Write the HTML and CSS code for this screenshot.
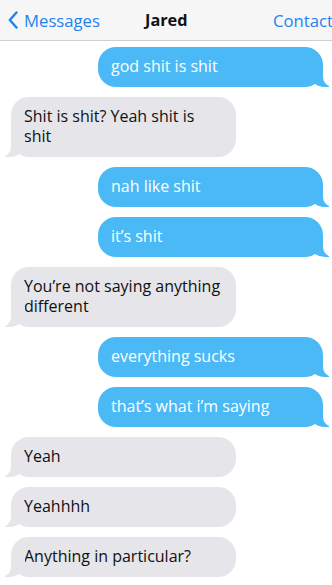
FILE: index.html
```html
<!DOCTYPE html>
<html>
<head>
<meta charset="utf-8">
<link rel="stylesheet" href="styles.css">
</head>
<body>
<header class="nav">
  <div class="back">
    <svg class="chev" width="10" height="18" viewBox="0 0 10 18"><path d="M8.5 1.5 L1.8 9 L8.5 16.5" fill="none" stroke="#1f82f2" stroke-width="2.4" stroke-linecap="round" stroke-linejoin="round"/></svg>
    <span>Messages</span>
  </div>
  <div class="title">Jared</div>
  <div class="contact">Contact</div>
</header>
<main class="thread">
  <div class="msg sent">god shit is shit</div>
  <div class="msg recv">Shit is shit? Yeah shit is shit</div>
  <div class="msg sent">nah like shit</div>
  <div class="msg sent">it’s shit</div>
  <div class="msg recv">You’re not saying anything different</div>
  <div class="msg sent">everything sucks</div>
  <div class="msg sent">that’s what i’m saying</div>
  <div class="msg recv">Yeah</div>
  <div class="msg recv">Yeahhhh</div>
  <div class="msg recv">Anything in particular?</div>
</main>
</body>
</html>
```
FILE: styles.css
```css
* { box-sizing: border-box; }
html, body { margin: 0; padding: 0; background: #fff; overflow: hidden; }
body { font-family: "Open Sans", "Noto Sans", sans-serif; width: 332px; }
.nav {
  height: 41px;
  background: #f6f6f6;
  border-bottom: 1px solid #cfcfcf;
  display: flex;
  align-items: center;
  white-space: nowrap;
  overflow: hidden;
}
.back {
  display: flex;
  align-items: center;
  gap: 6px;
  padding-left: 8px;
  color: #1f82f2;
  font-size: 16.7px;
  width: 140px;
  flex: none;
}
.chev { display: block; }
.title {
  font-weight: 700;
  font-size: 16.3px;
  color: #111;
  margin-left: 5px;
  width: 128px;
  flex: none;
}
.contact {
  color: #1f82f2;
  font-size: 16.7px;
}
.thread {
  display: flex;
  flex-direction: column;
  gap: 10px;
  padding-top: 6px;
  overflow: hidden;
}
.msg {
  position: relative;
  width: 225px;
  padding: 9px 13px 11px;
  font-size: 16px;
  line-height: 20px;
  border-radius: 18px;
}
.sent {
  align-self: flex-end;
  margin-right: 9px;
  background: #4bb9f6;
  color: #fff;
}
.recv {
  align-self: flex-start;
  margin-left: 11px;
  background: #e5e5ea;
  color: #111;
}
.msg::before, .msg::after {
  content: "";
  position: absolute;
  bottom: 0;
  height: 20px;
}
.sent::before {
  right: -6px;
  width: 20px;
  background: #4bb9f6;
  border-bottom-left-radius: 16px 14px;
}
.sent::after {
  right: -26px;
  width: 26px;
  background: #fff;
  border-bottom-left-radius: 10px;
}
.recv::before {
  left: -6px;
  width: 20px;
  background: #e5e5ea;
  border-bottom-right-radius: 16px 14px;
}
.recv::after {
  left: -26px;
  width: 26px;
  background: #fff;
  border-bottom-right-radius: 10px;
}
```
